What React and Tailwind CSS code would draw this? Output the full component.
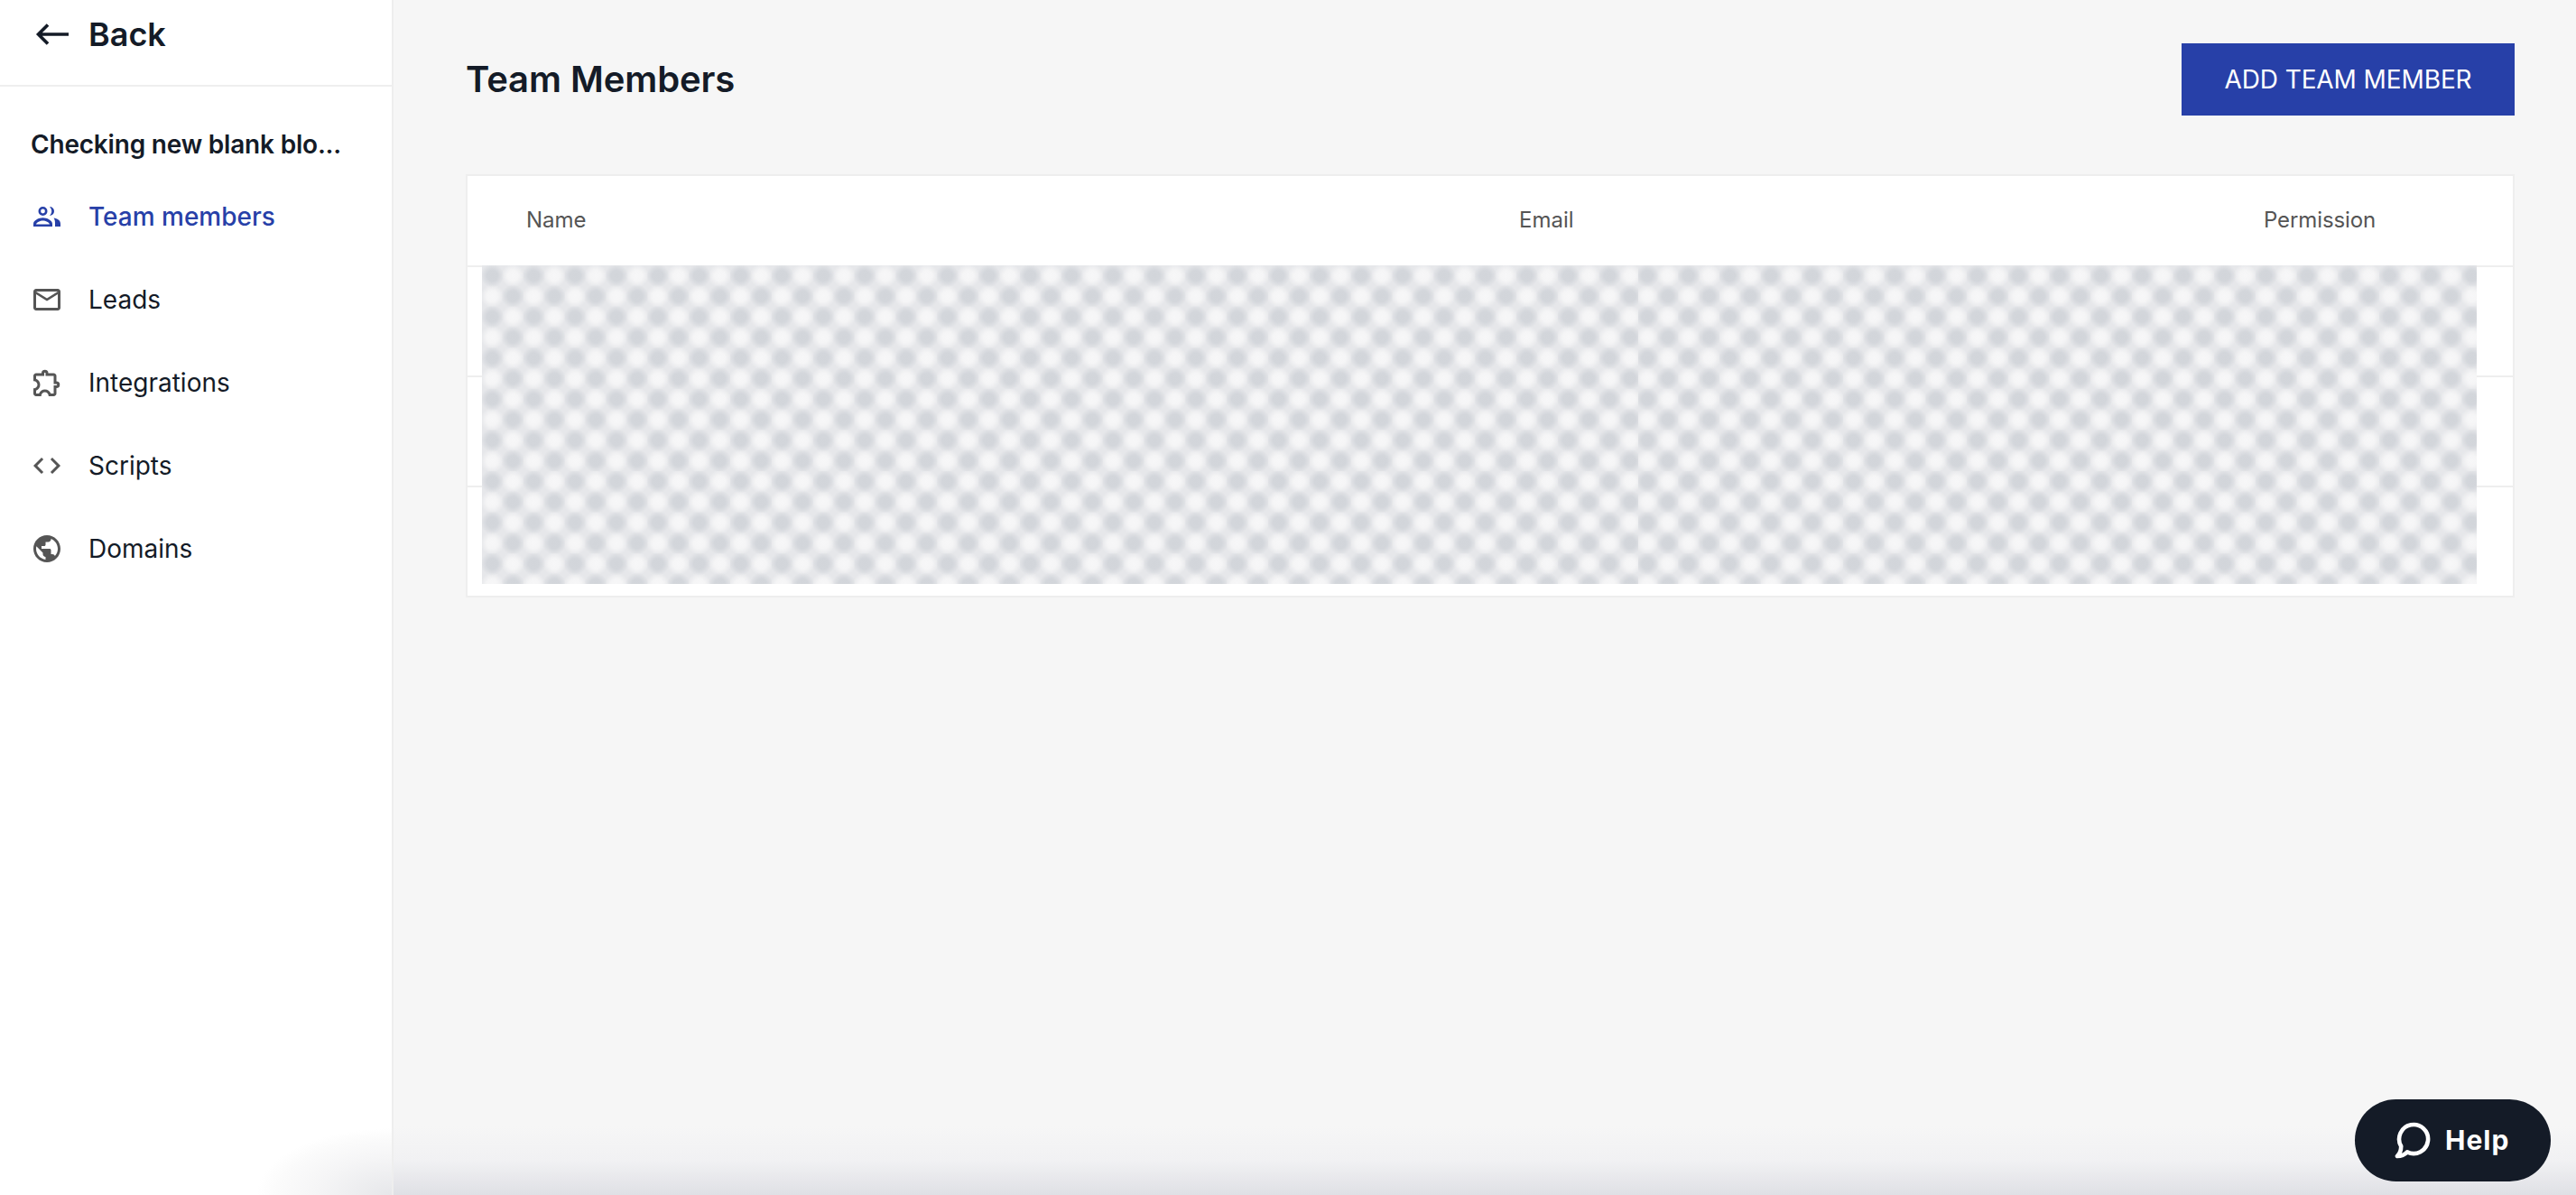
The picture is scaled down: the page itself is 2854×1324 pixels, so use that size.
import { MdMailOutline, MdOutlineExtension, MdCode, MdPublic } from 'react-icons/md'

// heavier than the package's people icon, so drawn by hand
const PeopleIcon = ({ className }) => (
  <span className={`w-[36px] h-[36px] flex items-center justify-center ${className}`}>
    <svg width="30" height="22" viewBox="0 0 30 22" fill="currentColor">
      <circle cx="10.500" cy="5" r="3.700" fill="none" stroke="currentColor" strokeWidth="2.600" />
      <path d="M18 0a5 5 0 0 1 0 10c1.500-1.500 2.200-3.200 2.200-5S19.500 1.500 18 0Z" />
      <path
        fillRule="evenodd"
        d="M0 22v-3c0-4 6-6.800 10.500-6.800S21 15 21 19v3ZM3 19.500h15c-.5-2-4.500-4-7.500-4S3.500 17.500 3 19.500Z"
      />
      <path d="M22.500 12.500c4 .5 7.500 2.500 7.500 6.500v3h-6v-3.500c0-2.300-.3-4.500-1.500-6Z" />
    </svg>
  </span>
)

const navItems = [
  { label: 'Team members', icon: PeopleIcon, active: true },
  { label: 'Leads', icon: MdMailOutline },
  { label: 'Integrations', icon: MdOutlineExtension },
  { label: 'Scripts', icon: MdCode },
  { label: 'Domains', icon: MdPublic },
]

const Redacted = ({ className }) => (
  <div
    className={`bg-[#e6e7ea] bg-[radial-gradient(circle_at_11.4px_11.4px,#d2d5da_0,#d3d6db_6px,transparent_13px),radial-gradient(circle_at_34.3px_34.2px,#d2d5da_0,#d3d6db_6px,transparent_13px),radial-gradient(circle_at_34.3px_11.4px,#f7f7f8_0,#f5f5f6_6px,transparent_13px),radial-gradient(circle_at_11.4px_34.2px,#f7f7f8_0,#f5f5f6_6px,transparent_13px)] ${className}`}
  />
)

const Sidebar = () => (
  <aside className="w-[436px] shrink-0 bg-white border-r-2 border-[#eeeeee]">
    <div className="h-[96px] border-b-2 border-[#eeeeee] flex items-center pl-[38px] pb-[18px]">
      <svg width="40" height="28" viewBox="0 0 40 28" fill="none" stroke="#141b27" strokeWidth="3.6">
        <path d="M38 14H5M15 3.5 4.5 14 15 24.5" />
      </svg>
      <span className="ml-[20px] text-[36px] leading-[44px] font-semibold text-[#141b27]">Back</span>
    </div>
    <div className="pt-[44px]">
      <div className="pl-[34px] h-[40px] flex items-center text-[28px] font-semibold tracking-[-0.2px] text-[#141b27] whitespace-nowrap">
        Checking new blank blo...
      </div>
      <nav className="mt-[14px] flex flex-col">
        {navItems.map(({ label, icon: Icon, active }) => (
          <div key={label} className="h-[92px] flex items-center pl-[34px] gap-[28px]">
            {active ? <Icon className="text-[#2740a8]" /> : <Icon size={36} className="text-[#555555]" />}
            <span className={`text-[28px] ${active ? 'text-[#2740a8] font-medium' : 'text-[#141b27]'}`}>{label}</span>
          </div>
        ))}
      </nav>
    </div>
  </aside>
)

const MembersTable = () => (
  <div className="relative mt-[65px] bg-white border-2 border-[#eeeeee]">
    <div className="h-[101px] border-b-2 border-[#eeeeee] grid grid-cols-[1098px_826px_1fr] items-center pl-[65px] pb-[2px] text-[24px] text-[#555555]">
      <span>Name</span>
      <span className="pl-[2px]">Email</span>
      <span className="pl-[1px] tracking-[-0.1px]">Permission</span>
    </div>
    <div className="h-[122px] border-b-2 border-[#eeeeee]" />
    <div className="h-[122px] border-b-2 border-[#eeeeee]" />
    <div className="h-[120px]" />
    <div className="absolute left-[16px] top-[99px] w-[2210px] h-[353px] flex">
      <Redacted className="w-[1281px] bg-[length:45.85px_45.6px]" />
      <Redacted className="flex-1 bg-[length:45.7px_45.6px] bg-[position:-1.4px_0]" />
    </div>
  </div>
)

const App = () => {
  return (
    <div className="relative h-[1324px] w-full overflow-hidden flex bg-[#f6f6f6] font-['Inter',sans-serif]">
      <Sidebar />
      <main className="flex-1 pl-[80px] pr-[68px] pt-[48px]">
        <div className="flex items-center justify-between">
          <h1 className="text-[40px] font-semibold tracking-[-0.1px] text-[#141b27]">Team Members</h1>
          <button className="w-[369px] h-[80px] bg-[#2740a8] text-white text-[28px] tracking-[-0.1px] uppercase">Add team member</button>
        </div>
        <MembersTable />
      </main>

      {/* soft shade along the bottom edge */}
      <div className="absolute left-[436px] right-0 bottom-0 h-[76px] bg-gradient-to-b from-[#f6f6f6]/0 via-[#f1f1f3] to-[#dfe0e5]" />
      <div className="absolute left-[284px] w-[150px] bottom-0 h-[74px] bg-[radial-gradient(ellipse_150px_74px_at_100%_100%,#e6e7ea_0,#f5f5f6_55%,#fbfbfb_85%,transparent_100%)]" />

      <button className="absolute left-[2609px] top-[1218px] w-[217px] h-[91px] rounded-full bg-[#141b27] flex items-center pl-[44px] gap-[16px] text-white text-[30px] font-bold tracking-[1px]">
        <svg width="40" height="42" viewBox="0 0 40 42" fill="none" stroke="white" strokeWidth="4.600" strokeLinecap="round" strokeLinejoin="round">
          <path d="M3 38C7 38 11 36.500 14 33.400A16 16 0 1 0 7.200 27C7.200 31 6 35 3 38Z" />
        </svg>
        Help
      </button>
    </div>
  )
}

export default App
